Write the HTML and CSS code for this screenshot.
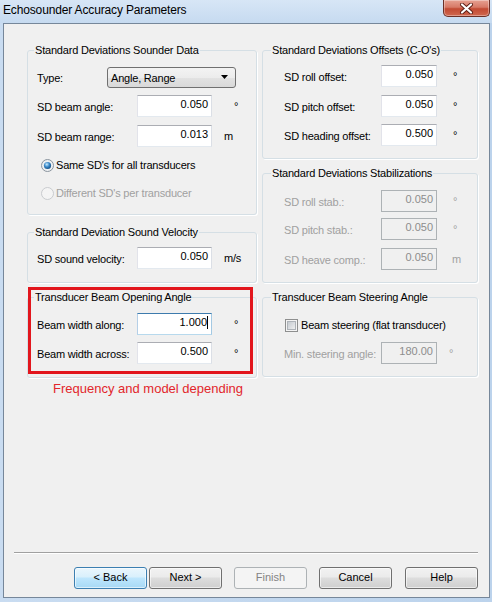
FILE: index.html
```html
<!DOCTYPE html>
<html><head>
<meta charset="UTF-8">
<title>Echosounder Accuracy Parameters</title>
<link rel="stylesheet" href="styles.css">
</head>
<body>

<div class="window">
	<div class="titlebar">
		<span class="title">Echosounder Accuracy Parameters</span>
		<div class="close">
			<svg width="15" height="11" viewBox="0 0 15 11"><path d="M3 1.5 L12 9.5 M12 1.5 L3 9.5" stroke="#5a1d14" stroke-width="4" stroke-linecap="round"/><path d="M3 1.5 L12 9.5 M12 1.5 L3 9.5" stroke="#fff" stroke-width="2.2" stroke-linecap="round"/></svg>
		</div>
	</div>

	<div class="client">
		<div class="columns">
			<div class="col col-left">
				<fieldset class="grp g-sounder">
					<legend>Standard Deviations Sounder Data</legend>
					<div class="row r1">
						<span class="lbl lbl-type">Type:</span>
						<div class="combo">Angle, Range
							<svg width="7" height="4" viewBox="0 0 7 4"><path d="M0 0 H7 L3.5 4 Z" fill="#000"/></svg>
						</div>
					</div>
					<div class="row r2"><span class="lbl">SD beam angle:</span><div class="field">0.050</div><span class="unit deg">°</span></div>
					<div class="row r3"><span class="lbl">SD beam range:</span><div class="field">0.013</div><span class="unit">m</span></div>
					<div class="opt r4">
						<svg class="radio" width="13" height="13" viewBox="0 0 13 13">
							<defs><radialGradient id="dot" cx="0.4" cy="0.35" r="0.7"><stop offset="0" stop-color="#c8ecff"/><stop offset="0.5" stop-color="#3a88c8"/><stop offset="1" stop-color="#124a7e"/></radialGradient></defs>
							<circle cx="6.5" cy="6.5" r="6" fill="#eef0f2" stroke="#8a949e"/>
							<circle cx="6.5" cy="6.5" r="3.6" fill="url(#dot)"/>
						</svg>
						<span>Same SD's for all transducers</span>
					</div>
					<div class="opt r5 off">
						<svg class="radio" width="13" height="13" viewBox="0 0 13 13"><circle cx="6.5" cy="6.5" r="6" fill="#f4f4f4" stroke="#c8cbce"/></svg>
						<span>Different SD's per transducer</span>
					</div>
				</fieldset>

				<fieldset class="grp g-velocity">
					<legend>Standard Deviation Sound Velocity</legend>
					<div class="row r1"><span class="lbl">SD sound velocity:</span><div class="field">0.050</div><span class="unit">m/s</span></div>
				</fieldset>

				<fieldset class="grp g-opening">
					<legend>Transducer Beam Opening Angle</legend>
					<div class="row r1"><span class="lbl">Beam width along:</span><div class="field focus">1.000<i class="caret"></i></div><span class="unit deg">°</span></div>
					<div class="row r2"><span class="lbl">Beam width across:</span><div class="field">0.500</div><span class="unit deg">°</span></div>
				</fieldset>

				<div class="mark"></div>
			</div>

			<div class="col col-right">
				<fieldset class="grp g-offsets">
					<legend>Standard Deviations Offsets (C-O's)</legend>
					<div class="row r1"><span class="lbl">SD roll offset:</span><div class="field">0.050</div><span class="unit deg">°</span></div>
					<div class="row r2"><span class="lbl">SD pitch offset:</span><div class="field">0.050</div><span class="unit deg">°</span></div>
					<div class="row r3"><span class="lbl">SD heading offset:</span><div class="field">0.500</div><span class="unit deg">°</span></div>
				</fieldset>

				<fieldset class="grp g-stab">
					<legend>Standard Deviations Stabilizations</legend>
					<div class="row r1 off"><span class="lbl">SD roll stab.:</span><div class="field">0.050</div><span class="unit deg">°</span></div>
					<div class="row r2 off"><span class="lbl">SD pitch stab.:</span><div class="field">0.050</div><span class="unit deg">°</span></div>
					<div class="row r3 off"><span class="lbl">SD heave comp.:</span><div class="field">0.050</div><span class="unit">m</span></div>
				</fieldset>

				<fieldset class="grp g-steer">
					<legend>Transducer Beam Steering Angle</legend>
					<div class="opt r1"><i class="check"></i><span>Beam steering (flat transducer)</span></div>
					<div class="row r2 off"><span class="lbl">Min. steering angle:</span><div class="field">180.00</div><span class="unit deg deg-min">°</span></div>
				</fieldset>
			</div>
		</div>

		<div class="note">Frequency and model depending</div>

		<div class="footer">
			<div class="sep"></div>
			<div class="buttons">
				<div class="pair">
					<div class="btn default">&lt; Back</div>
					<div class="btn">Next &gt;</div>
				</div>
				<div class="btn disabled">Finish</div>
				<div class="btn">Cancel</div>
				<div class="btn btn-help">Help</div>
			</div>
		</div>
	</div>
</div>

</body>
</html>
```

FILE: styles.css
```css
body {
	margin: 0;
	font: normal 400 11px/13px 'Liberation Sans', Arial, sans-serif;
	letter-spacing: -0.2px;
	color: #000;}

.window {
	width: 492px;
	height: 602px;
	display: flex;
	flex-direction: column;
	background: linear-gradient(90deg, #c9dcf1, #bcd3ec);}

/* title bar */
.titlebar {
	height: 23px;
	flex: none;
	display: flex;
	justify-content: space-between;
	align-items: flex-start;
	background: linear-gradient(180deg, #d7e6f6, #c6daf0);}

.title {
	margin: 3px 0 0 3px;
	font-size: 12px;
	line-height: 14px;
	letter-spacing: -0.15px;}

.close {
	width: 47px;
	height: 17px;
	margin-right: 2px;
	box-sizing: border-box;
	display: flex;
	align-items: center;
	justify-content: center;
	border: 1px solid #6b3027;
	border-top: none;
	border-radius: 0 0 5px 5px;
	background: linear-gradient(180deg, #e6a192 0%, #d77a67 45%, #c24a33 55%, #d0684f 100%);
	box-shadow: inset 0 0 0 1px rgba(255,255,255,0.35);}

/* client area */
.client {
	flex: 1;
	margin: 0 2px 4px 3px;
	padding: 20px 11px 8px 23px;
	display: flex;
	flex-direction: column;
	border: 1px solid #76879a;
	background: #f0f0f0;}

.columns {
	display: grid;
	grid-template-columns: 230px 216px;
	column-gap: 5px;
	align-items: start;}

.col {
	position: relative;
	display: flex;
	flex-direction: column;}

.grp {
	margin: 0;
	padding: 0 6px;
	min-width: 0;
	box-sizing: border-box;
	border: 1px solid #d5dfe5;
	border-radius: 3px;
	box-shadow: 1px 1px 0 #fff;}

.grp legend {
	padding: 0 1px;
	line-height: 13px;}

.col-right .grp legend {margin-left: 2px;}

.g-sounder  {height: 171px;}
.g-velocity {height: 57px; margin-top: 11px;}
.g-opening  {height: 87px; margin-top: 8px;}
.g-offsets  {height: 115px;}
.g-stab     {height: 116px; margin-top: 8px;}
.g-steer    {height: 86px; margin-top: 8px;}

.row {
	height: 22px;
	display: flex;
	align-items: center;}

.col-left .row {padding-left: 3px;}
.col-left .lbl {width: 100px;}
.col-left .field {width: 75px;}
.col-left .unit {margin-left: 12px;}
.col-left .unit.deg {margin-left: 22px;}

.col-right .row {padding-left: 15px;}
.col-right .lbl {width: 97px;}
.col-right .field {width: 56px;}
.col-right .unit {margin-left: 15px;}
.col-right .unit.deg {margin-left: 16px;}
.col-right .unit.deg-min {margin-left: 12px;}

.lbl {flex: none; padding-top: 3px;}
.lbl-type {width: 70px !important;}

/* row offsets */
.g-sounder .r1 {margin-top: 9px;}
.g-sounder .r2 {margin-top: 7px;}
.g-sounder .r3 {margin-top: 8px;}
.g-sounder .r4 {margin-top: 11px;}
.g-sounder .r5 {margin-top: 14px;}
.g-velocity .r1 {margin-top: 8px;}
.g-opening .r1 {margin-top: 9px;}
.g-opening .r2 {margin-top: 7px;}
.g-offsets .r1 {margin-top: 8px;}
.g-offsets .r2 {margin-top: 8px;}
.g-offsets .r3 {margin-top: 7px;}
.g-stab .r1 {margin-top: 10px;}
.g-stab .r2 {margin-top: 6px;}
.g-stab .r3 {margin-top: 8px;}
.g-steer .r1 {margin-top: 14px;}
.g-steer .r2 {margin-top: 10px;}

/* controls */
.field {
	height: 22px;
	flex: none;
	box-sizing: border-box;
	padding: 2px 3px 0 0;
	text-align: right;
	letter-spacing: 0;
	background: #fff;
	border: 1px solid;
	border-color: #abadb3 #dbdfe6 #e3e9ef #e2e3ea;}

.field.focus {border-color: #3d7bad #a4c9e3 #b7d9ed #b5cfe7;}

.caret {
	display: inline-block;
	width: 1px;
	height: 13px;
	vertical-align: -3px;
	background: #000;}

.off .lbl, .off span {color: #a0a0a0;}
.off .field {
	color: #8d8d8d;
	background: #f0f0f0;
	border-color: #adb2b5;}
.off .unit {color: #a0a0a0;}

.combo {
	width: 129px;
	height: 21px;
	box-sizing: border-box;
	padding: 2px 7px 0 3px;
	display: flex;
	justify-content: space-between;
	align-items: center;
	border: 1px solid #707070;
	border-radius: 3px;
	background: linear-gradient(180deg, #f3f3f3 0%, #ececec 50%, #e2e2e2 51%, #d9d9d9 100%);}

.combo svg {margin-top: -2px;}

.opt {
	height: 14px;
	display: flex;
	align-items: center;}

.g-sounder .opt {padding-left: 7px;}
.g-steer .opt {padding-left: 16px;}

.opt span {margin-left: 2px; padding-top: 1px;}
.g-steer .opt span {margin-left: 3px;}

.radio {flex: none;}

.check {
	flex: none;
	width: 13px;
	height: 13px;
	box-sizing: border-box;
	padding: 1px;
	border: 1px solid #8e8f8f;
	background: #f4f4f4;}

.check:after {
	content: '';
	display: block;
	width: 9px;
	height: 9px;
	box-sizing: border-box;
	border: 1px solid #aeb3b9;
	background: linear-gradient(135deg, #c5cad0, #eeeff0);}

/* annotation */
.mark {
	position: absolute;
	left: 1px;
	top: 243px;
	width: 225px;
	height: 87px;
	box-sizing: border-box;
	border: 3px solid #e2161d;}

.note {
	margin: 3px 0 0 26px;
	font-size: 13px;
	line-height: 15px;
	letter-spacing: 0;
	color: #e2262b;}

/* footer */
.footer {
	margin-top: auto;
	margin-left: -13px;}

.sep {
	height: 0;
	border-top: 1px solid #a0a0a0;
	border-bottom: 1px solid #fff;}

.buttons {
	margin-top: 13px;
	display: flex;
	justify-content: flex-end;
	gap: 12px;}

.pair {display: flex; gap: 2px;}
.btn-help {margin-left: 1px;}

.btn {
	width: 73px;
	height: 22px;
	box-sizing: border-box;
	padding-top: 3px;
	text-align: center;
	letter-spacing: 0;
	border: 1px solid #707070;
	border-radius: 3px;
	background: linear-gradient(180deg, #f2f2f2 0%, #ebebeb 45%, #dddddd 50%, #cfcfcf 100%);
	box-shadow: inset 0 0 0 1px rgba(255,255,255,0.6);}

.btn.default {
	border-color: #3c7fb1;
	background: linear-gradient(180deg, #eaf6fd 0%, #d9f0fc 45%, #bee6fd 50%, #a7d9f5 100%);}

.btn.disabled {
	color: #838383;
	border-color: #adb2b5;
	background: #f4f4f4;
	box-shadow: none;}
```
